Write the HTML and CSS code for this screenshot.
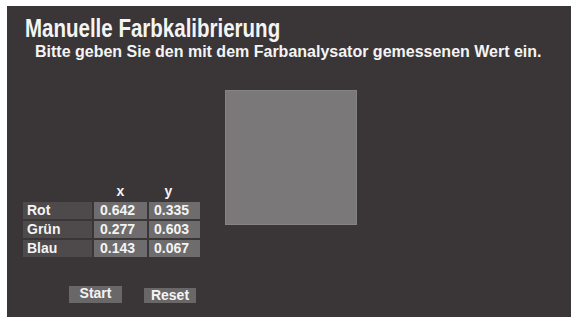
FILE: index.html
```
<!DOCTYPE html>
<html lang="de">
<head>
<meta charset="utf-8">
<link rel="stylesheet" href="styles.css">
</head>
<body>
<div class="panel">
  <div class="header">
    <h1 class="title">Manuelle Farbkalibrierung</h1>
    <p class="subtitle">Bitte geben Sie den mit dem Farbanalysator gemessenen Wert ein.</p>
  </div>
  <div class="content">
    <div class="left">
      <div class="table">
        <div class="head"></div>
        <div class="head hx">x</div>
        <div class="head hy">y</div>
        <div class="label">Rot</div>
        <div class="val vx">0.642</div>
        <div class="val vy">0.335</div>
        <div class="label">Grün</div>
        <div class="val vx">0.277</div>
        <div class="val vy">0.603</div>
        <div class="label">Blau</div>
        <div class="val vx">0.143</div>
        <div class="val vy">0.067</div>
      </div>
      <div class="buttons">
        <div class="btn start">Start</div>
        <div class="btn reset">Reset</div>
      </div>
    </div>
    <div class="swatch"></div>
  </div>
</div>
</body>
</html>
```
FILE: styles.css
```
html, body {
  margin: 0;
  padding: 0;
  background: #ffffff;
}
body {
  width: 576px;
  height: 317px;
  overflow: hidden;
  font-family: "Liberation Sans", Arial, sans-serif;
  font-weight: bold;
  color: #f4f4f4;
}
.panel {
  margin: 6px 5px 0 7px;
  height: 311px;
  background: #3a3637;
  box-sizing: border-box;
  padding-top: 8px;
}
.header {
  padding-left: 18px;
}
.title {
  margin: 0;
  font-size: 25px;
  line-height: 28px;
  font-weight: bold;
  transform: scaleX(0.82);
  transform-origin: left center;
  white-space: nowrap;
}
.subtitle {
  margin: 0 0 0 10px;
  font-size: 16px;
  line-height: 20px;
}
.content {
  display: flex;
  align-items: flex-start;
  padding-left: 16px;
  margin-top: 27px;
}
.left {
  width: 176px;
  padding-top: 94px;
}
.table {
  display: grid;
  grid-template-columns: 69px 53px 51px;
  grid-auto-rows: 17px;
  column-gap: 2px;
  row-gap: 2px;
  font-size: 14px;
  line-height: 17px;
}
.head {
  text-align: center;
}
.hy {
  padding-right: 12px;
}
.label {
  background: #4e4a4b;
  padding-left: 4px;
}
.val {
  background: #6f6c6d;
}
.vx {
  padding-left: 6px;
}
.vy {
  padding-left: 5px;
}
.buttons {
  display: flex;
  align-items: flex-end;
  margin-top: 29px;
  padding-left: 46px;
  gap: 22px;
}
.btn {
  background: #6a6768;
  font-size: 14px;
  line-height: 15px;
  text-align: center;
}
.start {
  width: 53px;
  height: 17px;
}
.reset {
  width: 52px;
  height: 15px;
}
.swatch {
  width: 130px;
  height: 133px;
  margin-top: 1px;
  margin-left: 26px;
  background: #7a7879;
  border: 1px solid #858384;
}
```
